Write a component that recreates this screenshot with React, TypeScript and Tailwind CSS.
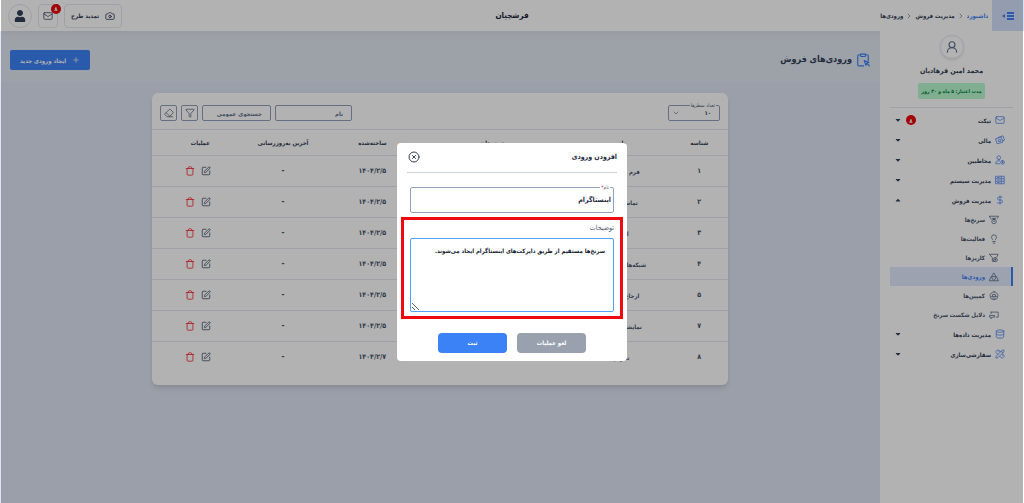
import React from "react";
import {
  ChevronDown,
  ChevronRight,
  CircleX,
  DollarSign,
  Eraser,
  Database,
  Filter,
  Lightbulb,
  Mail,
  Plus,
  SquarePen,
  Trash,
  Camera,
  UserRound,
  PencilRuler,
} from "lucide-react";
import { FaUser, FaCaretDown, FaCaretUp } from "react-icons/fa";

type Icon = React.ComponentType<{ className?: string }>;
type MenuItem = { label: string; icon: Icon; badge?: string; open?: boolean };
type SubItem = { label: string; icon: Icon; active?: boolean };

function glyph(path: string): Icon {
  return function Glyph({ className }) {
    return (
      <svg
        viewBox="0 0 24 24"
        className={className}
        fill="none"
        stroke="currentColor"
        strokeWidth="2"
        strokeLinecap="round"
        strokeLinejoin="round"
        aria-hidden="true"
      >
        <path d={path} />
      </svg>
    );
  };
}

const Cards = glyph("M7 6l12-4 4 10-4 2M2 9l13-4 4 12-13 4zM8 12l5-1.500 1.500 4-5 1.500z");
const UserGear = glyph(
  "M9 11a4.500 4.500 0 1 0 0-9 4.500 4.500 0 0 0 0 9zM11 21H2v-3a5 5 0 0 1 5-4h4M18 13a4.500 4.500 0 1 0 0 9 4.500 4.500 0 0 0 0-9zM18 16v3M16.500 17.500h3",
);
const Racks = glyph("M2 3h20v18H2zM2 9h20M2 15h20M15 3v18M6 6h4M6 12h4M6 18h4");
const LeadFunnel = glyph("M1 3h22l-3 5M1 3l4 7M8 8h8M12 8v4M12 10a5 5 0 1 0 0 11 5 5 0 0 0 0-11zM10 15h4");
const SalesFunnel = glyph("M1 3h21l-3 6M1 3l7 8v9h4M15 11a5 5 0 1 0 0 10 5 5 0 0 0 0-10zM15 14v4M13 16h4");
const Pyramid = glyph("M12 3l5 8H7zM6 12l5 9H1zM18 12l5 9H13z");
const Campaign = glyph("M12 2a9.500 9.500 0 1 0 0 19 9.500 9.500 0 0 0 0-19zM6 13h12M8 13l1-5h6l1 5M9 17h6");
const Board = glyph("M5 5h17v12h-5M5 5v4M2 13h11v4H8l-3 4v-4H2z");
const ClipboardCursor = glyph(
  "M8 3H5a2 2 0 0 0-2 2v15a2 2 0 0 0 2 2h8M16 3h3a2 2 0 0 1 2 2v8M8 2h8v3a1 1 0 0 1-1 1H9a1 1 0 0 1-1-1zM14 13l8 3-3.500 1.500L17 21zM19 18l4 4",
);

const topMenu: MenuItem[] = [
  { label: "تیکت", icon: Mail, badge: "۸" },
  { label: "مالی", icon: Cards },
  { label: "مخاطبین", icon: UserGear },
  { label: "مدیریت سیستم", icon: Racks },
  { label: "مدیریت فروش", icon: DollarSign, open: true },
];

const salesMenu: SubItem[] = [
  { label: "سرنخ‌ها", icon: LeadFunnel },
  { label: "فعالیت‌ها", icon: Lightbulb },
  { label: "کاریزها", icon: SalesFunnel },
  { label: "ورودی‌ها", icon: Pyramid, active: true },
  { label: "کمپین‌ها", icon: Campaign },
  { label: "دلایل شکست سرنخ", icon: Board },
];

const bottomMenu: MenuItem[] = [
  { label: "مدیریت داده‌ها", icon: Database },
  { label: "سفارشی‌سازی", icon: PencilRuler },
];

const rows = [
  { id: "۱", name: "فرم وب‌سایت", date: "۱۴۰۴/۲/۵" },
  { id: "۲", name: "تماس تلفنی", date: "۱۴۰۴/۲/۵" },
  { id: "۳", name: "ایمیل", date: "۱۴۰۴/۲/۵" },
  { id: "۴", name: "شبکه‌های اجتماعی", date: "۱۴۰۴/۲/۵" },
  { id: "۵", name: "ارجاع مشتری", date: "۱۴۰۴/۲/۵" },
  { id: "۷", name: "نمایشگاه تهران", date: "۱۴۰۴/۲/۵" },
  { id: "۸", name: "تقویم", date: "۱۴۰۴/۲/۷" },
];

function MenuRow({ item }: { item: MenuItem }) {
  const ItemIcon = item.icon;
  return (
    <li>
      <a href="#" className="flex h-5 items-center gap-1 pr-2 pl-1 text-[6px] font-bold text-slate-700">
        <ItemIcon className="size-2.5 shrink-0 text-[#5b8def]" />
        <span className="grow">{item.label}</span>
        {item.badge && (
          <span className="flex size-2.5 items-center justify-center rounded-full bg-red-600 text-[6px] text-white">
            {item.badge}
          </span>
        )}
        {item.open ? <FaCaretUp className="size-2" /> : <FaCaretDown className="size-2" />}
      </a>
    </li>
  );
}

function Sidebar() {
  return (
    <aside className="w-36 shrink-0 bg-white pr-[11px] pl-2.5">
      <div className="flex flex-col items-center border-b border-slate-200 pt-1 pb-2">
        <span className="flex size-6 items-center justify-center rounded-full border border-slate-200 shadow-sm">
          <UserRound className="size-3.5 text-slate-500" />
        </span>
        <p className="mt-1 text-[7px] leading-4 font-bold text-slate-700">محمد امین فرهادیان</p>
        <p className="mt-1 rounded-xs bg-green-200 px-1 text-[5px] leading-4 font-bold text-green-700">
          مدت اعتبار: ۵ ماه و ۳۰ روز
        </p>
      </div>
      <nav className="pt-0.5">
        <ul>
          {topMenu.map((item) => (
            <MenuRow key={item.label} item={item} />
          ))}
        </ul>
        <ul>
          {salesMenu.map(({ label, icon: ItemIcon, active }) => (
            <li key={label}>
              <a
                href="#"
                className={
                  active
                    ? "flex h-[19px] items-center gap-1 border-r-2 border-[#3b82f6] bg-[#e0e9fb] pr-3 text-[6px] font-bold text-[#3b82f6]"
                    : "flex h-[19px] items-center gap-1 border-r-2 border-transparent pr-3 text-[6px] font-bold text-slate-600"
                }
              >
                <ItemIcon className="size-2.5 text-slate-500" />
                {label}
              </a>
            </li>
          ))}
        </ul>
        <ul>
          {bottomMenu.map((item) => (
            <MenuRow key={item.label} item={item} />
          ))}
        </ul>
      </nav>
    </aside>
  );
}

function Header() {
  return (
    <header className="grid h-[31px] grid-cols-3 items-center bg-white shadow-md">
      <div className="flex h-full items-center">
        <button aria-label="منو" className="flex h-full w-8 items-center justify-center bg-[#d3e1fb] text-[#3b82f6]">
          <svg viewBox="0 0 12 8" className="h-2 w-3" fill="currentColor">
            <path d="M5 0h7v2H5zM5 3h7v2H5zM5 6h7v2H5zM0 4l3-2v4z" />
          </svg>
        </button>
        <nav className="flex items-center gap-0.5 pr-1 text-[6px] font-bold text-slate-700">
          <a href="#" className="text-[#3b82f6]">داشبورد</a>
          <ChevronRight className="size-2 text-slate-500" />
          <a href="#">مدیریت فروش</a>
          <ChevronRight className="size-2 text-slate-500" />
          <a href="#">ورودی‌ها</a>
        </nav>
      </div>
      <p className="text-center text-[8px] font-bold text-slate-800">فرشچیان</p>
      <div className="flex items-center justify-end gap-1.5 pl-2">
        <button className="flex h-6 items-center gap-1.5 rounded-sm border border-slate-200 px-1.5 text-[6px] font-bold text-slate-700">
          <Camera className="size-2.5" />
          تمدید طرح
        </button>
        <button aria-label="پیام‌ها" className="relative flex h-6 w-5 items-center justify-center rounded-sm border border-slate-200 text-slate-600">
          <Mail className="size-2.5" />
          <span className="absolute -top-px -right-1 flex size-2.5 items-center justify-center rounded-full bg-red-600 text-[6px] font-bold text-white">
            ۸
          </span>
        </button>
        <button aria-label="حساب کاربری" className="flex size-6 items-center justify-center rounded-full border border-slate-200 text-slate-700">
          <FaUser className="size-3" />
        </button>
      </div>
    </header>
  );
}

function EntriesTable() {
  return (
    <section className="mx-auto mt-3 w-full max-w-[576px] rounded-md bg-white pt-1 pb-3 shadow-md">
      <div className="flex h-8 items-center justify-between pr-2 pl-2">
        <div className="relative w-[52px]">
          <label htmlFor="page-size" className="absolute -top-1 right-1 bg-white px-px text-[5px] leading-2 whitespace-nowrap text-slate-600">
            تعداد سطرها
          </label>
          <select
            id="page-size"
            className="block h-4 w-full appearance-none rounded-xs border border-slate-400 bg-transparent pr-2 text-[6px] leading-3 font-bold text-slate-700"
          >
            <option>۱۰</option>
          </select>
          <ChevronDown className="pointer-events-none absolute top-1 left-1 size-2 text-slate-500" />
        </div>
        <div className="flex items-center gap-1">
          <input
            aria-label="نام"
            placeholder="نام"
            className="h-4 w-[77px] rounded-xs border border-slate-400 px-2 text-[6px] font-bold placeholder:text-slate-500"
          />
          <input
            aria-label="جستجوی عمومی"
            placeholder="جستجوی عمومی"
            className="h-4 w-[69px] rounded-xs border border-slate-400 px-2 text-[6px] font-bold placeholder:text-slate-500"
          />
          <button aria-label="فیلتر" className="flex h-4 w-[17px] items-center justify-center rounded-xs border border-slate-400 text-slate-500">
            <Filter className="size-2.5" />
          </button>
          <button aria-label="پاک کردن" className="flex h-4 w-[17px] items-center justify-center rounded-xs border border-slate-400 text-slate-500">
            <Eraser className="size-2.5" />
          </button>
        </div>
      </div>
      <table className="w-full table-fixed border-collapse text-center text-[6px] font-bold text-slate-600">
        <thead className="text-slate-700">
          <tr className="h-[26px] border-y border-slate-200">
            <th className="w-[10%]">شناسه</th>
            <th className="w-[17%]">نام</th>
            <th className="w-[28%]">توضیحات</th>
            <th className="w-[13.5%]">ساخته‌شده</th>
            <th className="w-[17.5%]">آخرین به‌روزرسانی</th>
            <th className="w-[14%] pl-4">عملیات</th>
          </tr>
        </thead>
        <tbody>
          {rows.map((row) => (
            <tr key={row.id} className="h-[31px] border-b border-slate-200 last:border-b-0">
              <td className="text-[7px]">{row.id}</td>
              <td>{row.name}</td>
              <td>-</td>
              <td className="text-[7px]">{row.date}</td>
              <td className="text-[8px]">-</td>
              <td className="pl-4">
                <div className="flex items-center justify-center gap-1.5 pr-1">
                  <button aria-label="ویرایش">
                    <SquarePen className="size-2.5" />
                  </button>
                  <button aria-label="حذف" className="text-red-500">
                    <Trash className="size-2.5" />
                  </button>
                </div>
              </td>
            </tr>
          ))}
        </tbody>
      </table>
    </section>
  );
}

function AddEntryDialog() {
  return (
    <div className="fixed inset-x-px inset-y-0 flex items-center justify-center bg-black/30">
      <form role="dialog" aria-labelledby="dialog-title" className="w-[230px] rounded-sm bg-white px-1 pb-2">
        <div className="mx-1.5 flex h-[30px] items-center justify-between border-b border-slate-300 pl-px">
          <h2 id="dialog-title" className="text-[7px] font-bold text-slate-800">افزودن ورودی</h2>
          <button type="button" aria-label="بستن">
            <CircleX className="size-3 text-slate-700" strokeWidth={2} />
          </button>
        </div>
        <div className="relative mx-[9px] mt-3.5">
          <label htmlFor="entry-name" className="absolute -top-1 right-1 bg-white px-px text-[5px] leading-2 text-slate-600">
            نام<span className="text-red-600">*</span>
          </label>
          <input
            id="entry-name"
            defaultValue="اینستاگرام"
            className="block h-[26px] w-full rounded-xs border border-slate-400 px-0.5 text-[7px] font-bold text-slate-800 outline-none"
          />
        </div>
        <div className="mt-1 border-3 border-[#ee0a0f] px-1.5 pt-0.5 pb-1">
          <label htmlFor="entry-description" className="block text-[7px] leading-3 text-slate-600">توضیحات</label>
          <textarea
            id="entry-description"
            defaultValue="سرنخ‌ها مستقیم از طریق دایرکت‌های اینستاگرام ایجاد می‌شوند."
            className="mt-1 block h-[74px] w-full rounded-xs border border-blue-400 px-2 py-1.5 text-[6px] leading-3 font-bold text-slate-900 outline-none"
          />
        </div>
        <div className="mt-3.5 flex justify-center gap-2.5 text-[6px] font-bold text-white">
          <button type="button" className="h-5 w-[69px] rounded-sm bg-gray-400">لغو عملیات</button>
          <button type="submit" className="h-5 w-[69px] rounded-sm bg-[#3b82f6]">ثبت</button>
        </div>
      </form>
    </div>
  );
}

export default function App() {
  return (
    <div dir="rtl" className="flex min-h-screen flex-col bg-[#dee4f3] font-['DejaVu_Sans_Condensed','DejaVu_Sans',sans-serif]">
      <Header />
      <div className="flex grow">
        <Sidebar />
        <main className="min-w-0 grow">
          <div className="flex h-[50px] items-center justify-between bg-slate-200/70 px-2.5 pt-2">
            <h1 className="flex items-center gap-1 text-[9px] font-bold text-slate-700">
              <ClipboardCursor className="size-3.5 text-[#3b82f6]" />
              ورودی‌های فروش
            </h1>
            <button className="flex h-5 items-center gap-1.5 rounded-xs bg-[#3b82f6] px-2.5 text-[6px] font-bold text-white">
              <Plus className="size-2" />
              ایجاد ورودی جدید
            </button>
          </div>
          <EntriesTable />
        </main>
      </div>
      <AddEntryDialog />
    </div>
  );
}
